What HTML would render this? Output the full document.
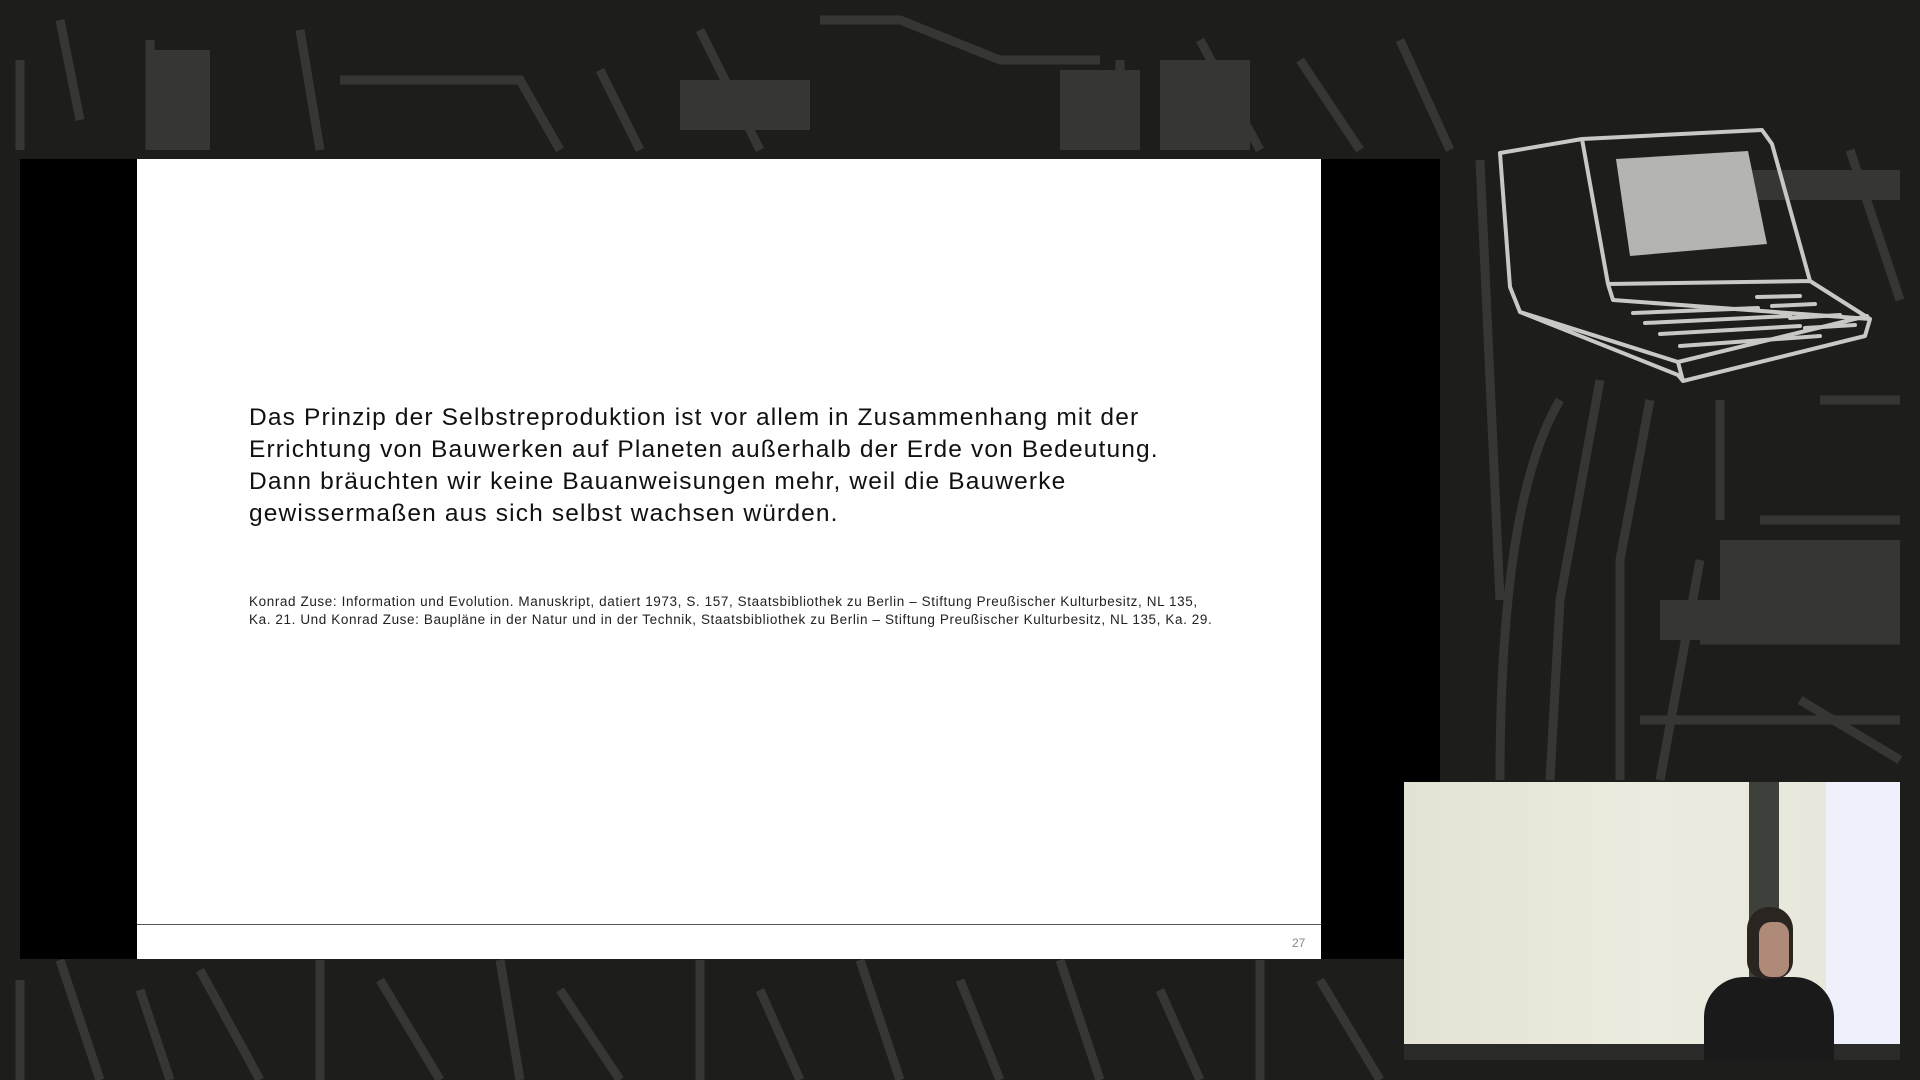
<!DOCTYPE html>
<html><head><meta charset="utf-8"><style>
html,body{margin:0;padding:0;width:1920px;height:1080px;overflow:hidden;background:#1d1d1b;font-family:"Liberation Sans",sans-serif}
#bg{position:absolute;left:0;top:0}
.frame{position:absolute;left:20px;top:159px;width:1420px;height:800px;background:#000}
.slide{position:absolute;left:137px;top:159px;width:1184px;height:800px;background:#fff}
.main{position:absolute;left:112px;top:243px;font-size:24.5px;line-height:32px;color:#111;white-space:nowrap;letter-spacing:1.15px}
.foot{position:absolute;left:112px;top:434px;font-size:13.5px;line-height:17.5px;color:#222;white-space:nowrap;letter-spacing:0.6px}
.line{position:absolute;left:0;top:765px;width:1184px;height:1px;background:#555}
.pn{position:absolute;left:1155px;top:777px;font-size:12px;color:#888}
.cam{position:absolute;left:1404px;top:782px;width:496px;height:278px;background:linear-gradient(90deg,#e4e2d4 0%,#ecebdf 50%,#e6e5da 100%);overflow:hidden}
</style></head><body>
<svg id="bg" width="1920" height="1080" fill="none" stroke="#363634" stroke-width="9">
<path d="M20 60 L20 150 M60 20 L80 120 M150 40 L150 150 M300 30 L320 150 M340 80 L520 80 L560 150 M600 70 L640 150 M700 30 L760 150 M820 20 L900 20 L1000 60 L1100 60 M1120 60 L1120 150 M1200 40 L1260 150 M1300 60 L1360 150 M1400 40 L1450 150"/>
<path d="M1480 160 L1500 600 M1560 400 Q1500 500 1500 780 M1600 380 L1560 600 L1550 780 M1650 400 L1620 560 L1620 780 M1700 560 L1660 780 M1720 400 L1720 520 M1760 520 L1900 520 M1500 980 L1650 900 M1700 640 L1900 640 M1800 700 L1900 760 M1640 720 L1900 720 M1850 150 L1900 300 M1820 400 L1900 400"/>
<path d="M20 980 L20 1080 M60 960 L100 1080 M140 990 L170 1080 M200 970 L260 1080 M320 960 L320 1080 M380 980 L440 1080 M500 960 L520 1080 M560 990 L620 1080 M700 960 L700 1080 M760 990 L800 1080 M860 960 L900 1080 M960 980 L1000 1080 M1060 960 L1100 1080 M1160 990 L1200 1080 M1260 960 L1260 1080 M1320 980 L1380 1080"/>
<g fill="#363634" stroke="none"><rect x="150" y="50" width="60" height="100"/><rect x="680" y="80" width="130" height="50"/><rect x="1060" y="70" width="80" height="80"/><rect x="1160" y="60" width="90" height="90"/><rect x="1700" y="170" width="200" height="30"/><rect x="1720" y="540" width="180" height="60"/><rect x="1660" y="600" width="240" height="40"/></g>
</svg>
<div class="frame"></div>
<div class="slide">
<div class="main">Das Prinzip der Selbstreproduktion ist vor allem in Zusammenhang mit der<br>Errichtung von Bauwerken auf Planeten außerhalb der Erde von Bedeutung.<br>Dann bräuchten wir keine Bauanweisungen mehr, weil die Bauwerke<br>gewissermaßen aus sich selbst wachsen würden.</div>
<div class="foot">Konrad Zuse: Information und Evolution. Manuskript, datiert 1973, S. 157, Staatsbibliothek zu Berlin – Stiftung Preußischer Kulturbesitz, NL 135,<br>Ka. 21. Und Konrad Zuse: Baupläne in der Natur und in der Technik, Staatsbibliothek zu Berlin – Stiftung Preußischer Kulturbesitz, NL 135, Ka. 29.</div>
<div class="line"></div>
<div class="pn">27</div>
</div>
<svg style="position:absolute;left:0;top:0" width="1920" height="1080" fill="none" stroke="#c8c8c4" stroke-width="4" stroke-linejoin="round" stroke-linecap="round">
<polygon points="1616,159 1748,151 1767,244 1630,256" fill="#b4b4b0" stroke="none"/>
<path d="M1582,139 L1762,130 L1772,144 L1810,281 M1582,139 L1608,284 L1810,281 M1582,139 L1500,153 L1510,287 L1520,312 L1678,375 L1683,381 L1865,336 L1870,319 L1810,281 M1608,284 L1613,300 L1870,319 M1678,362 L1867,316 M1678,362 L1683,381 M1520,312 L1678,362"/>
<path d="M1633,313 L1758,308 M1645,323 L1790,316 M1660,334 L1800,326 M1680,346 L1820,336 M1757,297 L1800,296 M1772,306 L1815,304 M1790,318 L1840,315 M1805,328 L1855,325"/>
</svg>
<div class="cam">
<div style="position:absolute;left:345px;top:0;width:30px;height:278px;background:#3e403c"></div>
<div style="position:absolute;left:422px;top:0;width:74px;height:278px;background:#eef1fb"></div>
<div style="position:absolute;left:0;top:262px;width:496px;height:16px;background:#2a2a28"></div>
<div style="position:absolute;left:300px;top:195px;width:130px;height:83px;background:#1a1a1a;border-radius:40px 40px 0 0"></div>
<div style="position:absolute;left:343px;top:125px;width:46px;height:72px;background:#2b2522;border-radius:22px 22px 18px 18px"></div>
<div style="position:absolute;left:355px;top:140px;width:30px;height:55px;background:#b08a78;border-radius:12px"></div>
</div>
</body></html>
